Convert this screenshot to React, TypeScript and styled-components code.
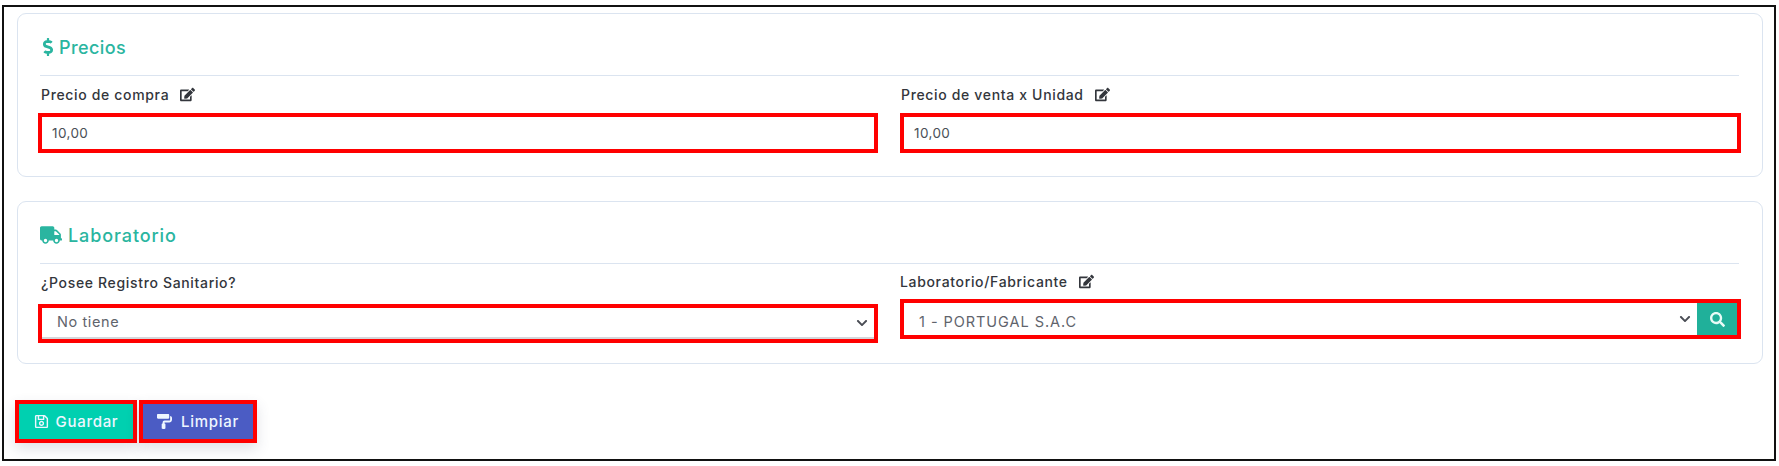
import React from "react";
import styled, { createGlobalStyle } from "styled-components";
import { FaDollarSign, FaTruck, FaEdit, FaSearch, FaRegSave, FaPaintRoller, FaChevronDown } from "react-icons/fa";

const Global = createGlobalStyle`
  html, body { margin: 0; padding: 0; background: #fff; }
  body { font-family: Inter, "Open Sans", "Liberation Sans", sans-serif; }
  * { box-sizing: border-box; }
`;

const Frame = styled.div`
  width: 1774px;
  height: 456px;
  margin: 5px 0 0 2px;
  border: 2px solid #111;
  padding: 6px 11px 0 13px;
  background: #fff;
  display: flex;
  flex-direction: column;
  align-items: stretch;
`;

const Card = styled.section<{ $height: number; $gap: number }>`
  height: ${(p) => p.$height}px;
  margin-bottom: ${(p) => p.$gap}px;
  border: 1px solid #dbe4f0;
  border-radius: 9px;
  padding: 0 21px 0 20px;
`;

const Title = styled.h2<{ $gap: number; $track: number }>`
  margin: 0 2px;
  height: 62px;
  border-bottom: 1px solid #dbe4f0;
  padding-top: 5px;
  display: flex;
  align-items: center;
  gap: ${(p) => p.$gap}px;
  color: #2ab5a0;
  font-size: 18px;
  font-weight: 500;
  letter-spacing: ${(p) => p.$track}px;
`;

const Columns = styled.div`
  display: grid;
  grid-template-columns: 840px 841px;
  column-gap: 22px;
`;

const Label = styled.label<{ $height: number; $inset: number }>`
  height: ${(p) => p.$height}px;
  padding: 0 0 ${(p) => p.$height - 37}px ${(p) => p.$inset}px;
  display: flex;
  align-items: center;
  gap: 11px;
  color: #33363c;
  font-size: 14px;
  font-weight: 500;
  letter-spacing: 0.66px;
`;

const Marked = styled.div`
  border: 4px solid #ff0000;
  display: flex;
  align-items: stretch;
  position: relative;
`;

const TextInput = styled.input`
  width: 100%;
  height: 32px;
  border: 0;
  outline: 0;
  padding: 0 10px;
  color: #4a4f57;
  font: 400 13.5px Inter, sans-serif;
  letter-spacing: 0.4px;
`;

const SelectBox = styled.div<{ $rule: boolean }>`
  flex: 1;
  position: relative;
  height: ${(p) => (p.$rule ? 31 : 32)}px;
  border-bottom: ${(p) => (p.$rule ? "2px solid #d4d6da" : "0")};
`;

const Select = styled.select<{ $drop: number; $lift: number; $track: number }>`
  width: 100%;
  height: 100%;
  appearance: none;
  border: 0;
  outline: 0;
  background: #fff;
  padding: ${(p) => p.$drop}px 15px ${(p) => p.$lift}px;
  color: #5f646c;
  font: 400 14.5px Inter, sans-serif;
  letter-spacing: ${(p) => p.$track}px;
`;

const Chevron = styled.span<{ $top: number }>`
  position: absolute;
  right: 6px;
  top: ${(p) => p.$top}px;
  display: flex;
  color: #4a4d55;
  font-size: 12px;
  pointer-events: none;
`;

const SearchButton = styled.button`
  width: 40px;
  border: 0;
  background: #20b09a;
  color: #e8fbf7;
  font-size: 15px;
  display: flex;
  align-items: center;
  justify-content: center;
  padding: 0;
`;

const Actions = styled.div`
  display: flex;
  gap: 2px;
  margin-left: -2px;
`;

const ActionFrame = styled.div<{ $width: number }>`
  width: ${(p) => p.$width}px;
  height: 43px;
  border: 4px solid #ff0000;
  box-shadow: 0 6px 14px rgba(60, 70, 100, 0.16);
`;

const ActionButton = styled.button<{ $bg: string; $gap: number }>`
  width: 100%;
  height: 100%;
  border: 0;
  padding: 0;
  background: ${(p) => p.$bg};
  color: #eef6ff;
  display: flex;
  align-items: center;
  justify-content: center;
  gap: ${(p) => p.$gap}px;
  font: 500 15px Inter, sans-serif;
  letter-spacing: 0.7px;
`;

const Edit = styled(FaEdit)`
  font-size: 15px;
  color: #33363c;
`;

export default function App() {
  return (
    <>
      <Global />
      <Frame>
        <Card $height={164} $gap={24}>
          <Title $gap={2} $track={0.4}><FaDollarSign size={18} style={{ marginLeft: -1 }} />Precios</Title>
          <Columns>
            <div>
              <Label $height={37} $inset={3}>Precio de compra <Edit /></Label>
              <Marked><TextInput defaultValue="10,00" /></Marked>
            </div>
            <div>
              <Label $height={37} $inset={1}>Precio de venta x Unidad <Edit /></Label>
              <Marked><TextInput defaultValue="10,00" /></Marked>
            </div>
          </Columns>
        </Card>
        <Card $height={163} $gap={36}>
          <Title $gap={6} $track={0.9}><FaTruck size={22} />Laboratorio</Title>
          <Columns>
            <div>
              <Label $height={40} $inset={3}>¿Posee Registro Sanitario?</Label>
              <Marked>
                <SelectBox $rule>
                  <Select $drop={0} $lift={2} $track={0.6} defaultValue="no"><option value="no">No tiene</option></Select>
                  <Chevron $top={9}><FaChevronDown /></Chevron>
                </SelectBox>
              </Marked>
            </div>
            <div>
              <Label $height={35} $inset={3}>Laboratorio/Fabricante <Edit /></Label>
              <Marked>
                <SelectBox $rule={false}>
                  <Select $drop={4} $lift={0} $track={0.95} defaultValue="1"><option value="1">1 - PORTUGAL S.A.C</option></Select>
                  <Chevron $top={10}><FaChevronDown /></Chevron>
                </SelectBox>
                <SearchButton aria-label="Buscar"><FaSearch /></SearchButton>
              </Marked>
            </div>
          </Columns>
        </Card>
        <Actions>
          <ActionFrame $width={122}>
            <ActionButton $bg="#00d0b0" $gap={7}><FaRegSave size={15} />Guardar</ActionButton>
          </ActionFrame>
          <ActionFrame $width={118}>
            <ActionButton $bg="#4b5cc4" $gap={9}><FaPaintRoller size={15} />Limpiar</ActionButton>
          </ActionFrame>
        </Actions>
      </Frame>
    </>
  );
}
